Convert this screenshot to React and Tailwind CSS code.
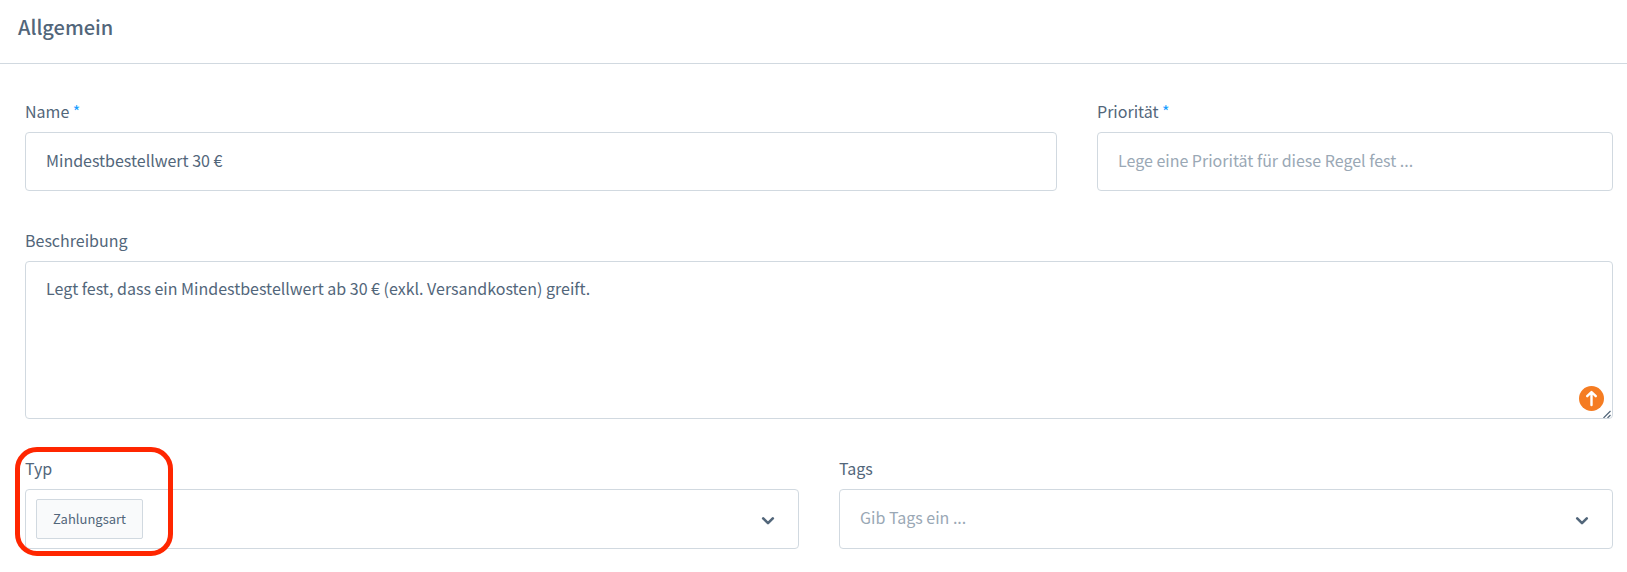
import { useState } from "react";

function Label({ htmlFor, required, children }) {
  return (
    <label htmlFor={htmlFor} className="mb-2.5 block self-start text-base leading-[22px]">
      {children}
      {required && <span className="text-[#189eff]"> *</span>}
    </label>
  );
}

function Chevron() {
  return (
    <svg viewBox="0 0 14 10" className="h-2.5 w-3.5" fill="none" stroke="currentColor" strokeWidth="2.6" strokeLinecap="round" strokeLinejoin="round" aria-hidden="true">
      <path d="M2.2 2.4 7 7.2l4.8-4.8" />
    </svg>
  );
}

const box = "w-full rounded border border-[#d1d9e0] bg-white";
const field = "h-[59px] px-5 pb-1 text-base leading-6 placeholder:text-[#9aa8b5]";

function MultiSelect({ id, label, tags, placeholder }) {
  const [value, setValue] = useState("");
  return (
    <div className="flex min-w-0 flex-col">
      <Label htmlFor={id}>{label}</Label>
      <div className={`${box} flex h-[60px] items-center pr-3.5`}>
        {tags.map((tag) => (
          <button key={tag} type="button" className="ml-2.5 h-10 rounded-xs border border-[#d1d9e0] bg-[#f9fafb] px-4 text-[13px]">
            {tag}
          </button>
        ))}
        <input
          id={id}
          value={value}
          onChange={(e) => setValue(e.target.value)}
          placeholder={placeholder}
          className="h-full min-w-0 flex-1 bg-transparent pb-1 pl-5 text-base leading-6 outline-none placeholder:text-[#9aa8b5]"
        />
        <button type="button" aria-label={`${label} öffnen`} className="flex size-8 items-center justify-center pt-1 text-[#52667a]">
          <Chevron />
        </button>
      </div>
    </div>
  );
}

export default function App() {
  return (
    <main className="bg-white pb-6 font-['Noto_Sans_CJK_SC','Open_Sans',sans-serif] text-[#52667a]">
      <header className="flex h-16 items-start border-b border-[#d1d9e0] px-[18px] pt-3">
        <h1 className="text-xl leading-[30px] font-medium">Allgemein</h1>
      </header>

      <form className="flex flex-col gap-[38px] pt-9 pr-3.5 pl-[25px]">
        <div className="grid grid-cols-[2fr_1fr] gap-x-10">
          <div className="min-w-0">
            <Label htmlFor="name" required>Name</Label>
            <input id="name" defaultValue="Mindestbestellwert 30 €" className={`${box} ${field}`} />
          </div>
          <div className="min-w-0">
            <Label htmlFor="priority" required>Priorität</Label>
            <input id="priority" placeholder="Lege eine Priorität für diese Regel fest ..." className={`${box} ${field}`} />
          </div>
        </div>

        <div>
          <Label htmlFor="description">Beschreibung</Label>
          <div className="relative">
            <textarea
              id="description"
              defaultValue="Legt fest, dass ein Mindestbestellwert ab 30 € (exkl. Versandkosten) greift."
              className={`${box} block h-[158px] resize-none px-5 py-3.5 text-base leading-6`}
            />
            <button type="button" aria-label="Absenden" className="absolute right-[9px] bottom-2 flex size-[25px] items-center justify-center rounded-full bg-[#f57c22] text-white">
              <svg viewBox="0 0 25 25" className="size-[25px]" fill="none" stroke="currentColor" strokeWidth="2.4" strokeLinecap="round" strokeLinejoin="round" aria-hidden="true">
                <path d="M12.5 19V7M8.2 10.2l4.3-4.2 4.3 4.2" />
              </svg>
            </button>
            <svg viewBox="0 0 8 8" className="absolute right-0.5 bottom-px size-2" fill="none" stroke="#52667a" strokeWidth="1.2" aria-hidden="true">
              <path d="M0.5 8 7.5 1M4.5 8 7.5 5" />
            </svg>
          </div>
        </div>

        <div className="relative grid grid-cols-2 gap-x-10">
          <MultiSelect id="type" label="Typ" tags={["Zahlungsart"]} />
          <MultiSelect id="tags" label="Tags" tags={[]} placeholder="Gib Tags ein ..." />
          <div className="pointer-events-none absolute -top-2.5 -left-2.5 h-[109px] w-[158px] rounded-[22px] border-5 border-[#ff2600]" />
        </div>
      </form>
    </main>
  );
}
